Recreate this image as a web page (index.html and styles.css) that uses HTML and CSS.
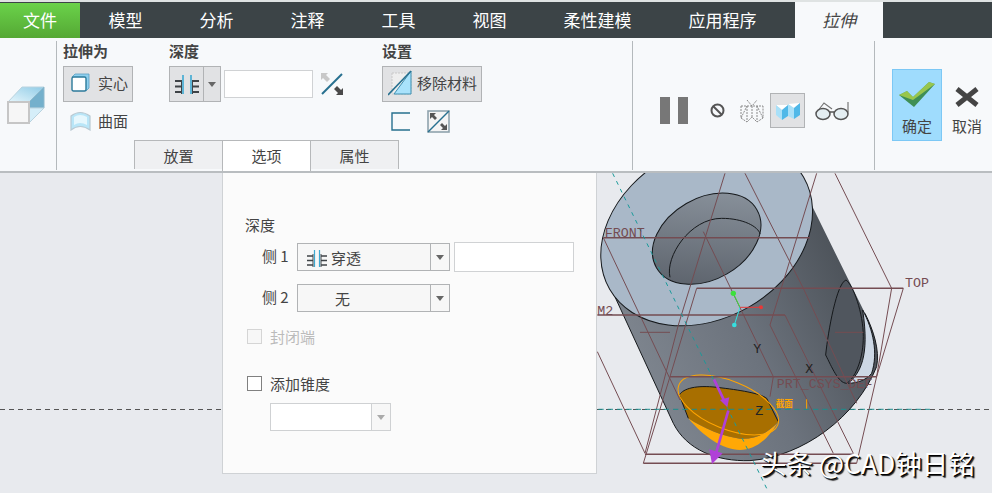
FILE: index.html
```html
<!DOCTYPE html>
<html lang="zh-CN">
<head>
    <meta charset="UTF-8">
    <title>拉伸</title>
    <link rel="stylesheet" href="styles.css">
</head>
<body>
    <nav class="tabs">
        <a class="tab file">文件</a>
        <a class="tab">模型</a>
        <a class="tab">分析</a>
        <a class="tab">注释</a>
        <a class="tab">工具</a>
        <a class="tab">视图</a>
        <a class="tab wide">柔性建模</a>
        <a class="tab wide">应用程序</a>
        <a class="tab active">拉伸</a>
    </nav>

    <section class="ribbon">
        <div class="sec sec-type">
            <svg class="cube" width="40" height="40" viewBox="0 0 40 40">
                <defs>
                    <linearGradient id="cubeTop" x1="0" y1="1" x2="1" y2="0">
                        <stop offset="0" stop-color="#e6f6fc"/>
                        <stop offset="1" stop-color="#8fcbe6"/>
                    </linearGradient>
                </defs>
                <polygon points="2,16 16,1 38,1 23,16" fill="url(#cubeTop)" stroke="#b9d3df"/>
                <polygon points="23,16 38,1 38,22 23,22" fill="#74b0cc" stroke="#8fb9cc"/>
                <polygon points="23,22 38,22 23,37" fill="#d5eef9" stroke="#b9d3df"/>
                <rect x="2" y="16" width="21" height="21" fill="#f6f6f6" stroke="#c6c6c6" stroke-width="2"/>
            </svg>
        </div>

        <div class="sec sec-main">
            <div class="groups">
                <div class="group g-as">
                    <h4>拉伸为</h4>
                    <button class="btn btn-solid">
                        <svg width="19" height="19" viewBox="0 0 19 19">
                            <polygon points="1,4 4,1 18,1 18,15 15,18" fill="#8fd0ee" stroke="#5aa0c0" stroke-width=".8"/>
                            <rect x="1" y="4" width="14" height="14" rx="1.500" fill="#fff" stroke="#2c7a9a" stroke-width="1.400"/>
                        </svg>
                        实心
                    </button>
                    <div class="plain">
                        <svg width="21" height="20" viewBox="0 0 21 20">
                            <path d="M1 5 Q10 -2 20 5 L20 19 Q10 12 1 19 Z" fill="#b9e6f8" stroke="#b9c9d2" stroke-width="1.200"/>
                            <path d="M4 6 Q10 2 17 6 L17 14 Q10 10 4 14 Z" fill="#e6f7fd"/>
                        </svg>
                        曲面
                    </div>
                </div>

                <div class="group g-depth">
                    <h4>深度</h4>
                    <div class="depth-row">
                        <div class="split">
                            <span class="split-icon">
                                <svg width="26" height="19" viewBox="0 0 26 19">
                                    <path d="M1 6h7M1 11.500h7M1 17h7M18 6h7M18 11.500h7M18 17h7" stroke="#3f4347" stroke-width="1.800"/>
                                    <path d="M7.500 5v14M18.500 5v14" stroke="#3f4347" stroke-width="1"/>
                                    <path d="M9 0v19M17 0v19" stroke="#3ea9d2" stroke-width="1.600"/>
                                </svg>
                            </span>
                            <span class="split-arrow"><i class="caret"></i></span>
                        </div>
                        <div class="field"></div>
                        <svg class="flip" width="24" height="24" viewBox="0 0 24 24">
                            <path d="M2 22 L22 2" stroke="#27708f" stroke-width="2"/>
                            <path d="M1 1h7L6 3l4 4-3 3-4-4-2 2z" fill="#c8c8c8"/>
                            <path d="M23 23h-7l2-2-4-4 3-3 4 4 2-2z" fill="#4a4a4a"/>
                        </svg>
                    </div>
                </div>

                <div class="group g-set">
                    <h4>设置</h4>
                    <button class="btn btn-remove">
                        <svg width="24" height="26" viewBox="0 0 24 26">
                            <rect x="4" y="3" width="19" height="21" fill="#eee" stroke="#c9c9c9" stroke-dasharray="2 1"/>
                            <polygon points="23,1 23,24 6,24" fill="#a9e2fb" stroke="#3f8fb0"/>
                            <path d="M0 25 L23 1" stroke="#27708f" stroke-width="1.600"/>
                        </svg>
                        移除材料
                    </button>
                    <div class="set-icons">
                        <svg width="19" height="19" viewBox="0 0 19 19">
                            <path d="M19 1H1v17h18" fill="none" stroke="#27708f" stroke-width="1.400"/>
                        </svg>
                        <svg width="23" height="23" viewBox="0 0 23 23">
                            <rect x="1" y="1" width="21" height="21" fill="#f4f4f4" stroke="#8fa3ad" stroke-width="1.600"/>
                            <path d="M1 22 L22 1" stroke="#27708f" stroke-width="1.400"/>
                            <path d="M3 3h6L7 5l3 3-2 2-3-3-2 2z" fill="#555"/>
                            <path d="M20 20h-6l2-2-3-3 2-2 3 3 2-2z" fill="#555"/>
                        </svg>
                    </div>
                </div>
            </div>
            <div class="panel-tabs">
                <span class="ptab">放置</span>
                <span class="ptab on">选项</span>
                <span class="ptab">属性</span>
            </div>
        </div>

        <div class="sec sec-tools">
            <svg class="pause" width="28" height="27" viewBox="0 0 28 27">
                <rect x="0" y="0" width="10" height="27" fill="#777"/>
                <rect x="18" y="0" width="10" height="27" fill="#777"/>
            </svg>
            <svg class="no" width="15" height="15" viewBox="0 0 15 15">
                <circle cx="7.500" cy="7.500" r="6" fill="none" stroke="#555" stroke-width="2"/>
                <path d="M3.500 3.500l8 8" stroke="#555" stroke-width="2"/>
            </svg>
            <svg class="wire" width="24" height="24" viewBox="0 0 24 24">
                <path d="M1 7h22M7 1l5 6 5-6M1 7v12l6 4 5-5 5 5 6-4V7M7 7v16M17 7v16M12 7v11M1 19l6-12M23 19L17 7" fill="none" stroke="#8b8b8b" stroke-width="1" stroke-dasharray="2 1"/>
            </svg>
            <span class="shade">
                <svg width="24" height="20" viewBox="0 0 24 20">
                    <polygon points="0,4 12,4 6,9" fill="#fff"/>
                    <polygon points="12,3 24,2 18,7" fill="#fff"/>
                    <polygon points="0,4 6,9 6,19 0,14" fill="#a9e0f8"/>
                    <polygon points="6,9 12,4 12,15 6,19" fill="#4fb8e8"/>
                    <polygon points="12,3 18,7 18,18 12,15" fill="#a9e0f8"/>
                    <polygon points="18,7 24,2 24,14 18,18" fill="#4fb8e8"/>
                </svg>
            </span>
            <svg class="glasses" width="35" height="20" viewBox="0 0 35 20">
                <path d="M2 11L9 2l8 6M33 1v10" fill="none" stroke="#777" stroke-width="1.200"/>
                <ellipse cx="8" cy="13" rx="7" ry="5.500" fill="#e4eef2" stroke="#555" stroke-width="1.500"/>
                <ellipse cx="26" cy="13" rx="7" ry="5.500" fill="#e4eef2" stroke="#555" stroke-width="1.500"/>
                <path d="M15 11h4" stroke="#555" stroke-width="1.500"/>
            </svg>
        </div>

        <div class="sec sec-done">
            <button class="act ok">
                <svg width="36" height="26" viewBox="0 0 36 26">
                    <polygon points="0,13 8,9 14,15 30,0 36,2 15,25" fill="#3f8f55"/>
                    <polygon points="0,13 8,9 14,15 30,0 36,2 14,18" fill="#b7d84b" opacity=".75"/>
                </svg>
                确定
            </button>
            <button class="act cancel">
                <svg width="26" height="20" viewBox="0 0 26 20">
                    <path d="M3 2l20 16M23 2L3 18" stroke="#444" stroke-width="5"/>
                </svg>
                取消
            </button>
        </div>
    </section>

    <main class="view">
        <svg class="scene" width="992" height="320" viewBox="0 0 992 320">
            <defs>
                <linearGradient id="bodyFill" x1="0" y1="1" x2="1" y2="0.55">
                    <stop offset="0" stop-color="#878e97"/>
                    <stop offset=".6" stop-color="#6c737d"/>
                    <stop offset="1" stop-color="#4e545b"/>
                </linearGradient>
                <linearGradient id="holeFill" x1="0" y1="1" x2="1" y2="0">
                    <stop offset="0" stop-color="#565c65"/>
                    <stop offset="1" stop-color="#8f98a2"/>
                </linearGradient>
            </defs>
            <path d="M0 236.500H222M597 236.500H992" stroke="#555" stroke-dasharray="5 4"/>
            <g transform="translate(590 -3) scale(.3333)">
                <path d="M70 370 L250 760 C290 840 380 875 480 872 C640 860 800 740 860 590 C870 540 850 480 825 430 L655 85 L300 300 Z" fill="url(#bodyFill)"/>
                <path d="M70 370 L250 760 C290 840 380 875 480 872 C640 860 800 740 860 590 C870 540 850 480 825 430" fill="none" stroke="#15181b" stroke-width="3"/>
                <ellipse cx="350" cy="190" rx="336" ry="255" transform="rotate(-30 350 190)" fill="#a9b8c8" stroke="#15181b" stroke-width="3"/>
                <ellipse cx="350" cy="206" rx="174" ry="122" transform="rotate(-30 350 206)" fill="url(#holeFill)" stroke="#15181b" stroke-width="3"/>
                <path d="M240 322 C225 260 300 145 395 145 C460 145 505 170 510 192" fill="none" stroke="#15181b" stroke-width="3"/>
                <path d="M818 420 C850 480 865 550 845 610 C830 630 800 640 775 640 C810 610 840 560 818 420 Z" fill="#cdd8e5" stroke="#15181b" stroke-width="3"/>
                <path d="M768 330 C790 345 820 430 820 500 C820 560 800 620 770 640 C745 640 725 590 707 555 C715 480 740 340 768 330 Z" fill="#50565e" stroke="#15181b" stroke-width="3"/>
                <path d="M295 745 C340 800 400 840 450 840 C490 840 530 815 562 760 C530 790 500 808 450 806 C400 800 340 775 295 745 Z" fill="#ffa806"/>
                <path d="M268 675 C280 655 320 645 380 652 C450 660 510 670 530 685 L565 755 C530 790 500 808 450 806 C400 800 340 775 295 745 Z" fill="#a86f00"/>
                <path d="M295 745 L268 675 C280 655 320 645 380 652 C450 660 510 670 530 685 L565 755" fill="none" stroke="#15181b" stroke-width="3"/>
                <ellipse cx="415" cy="705" rx="160" ry="72" transform="rotate(22 415 705)" fill="none" stroke="#ffa500" stroke-width="3"/>

                <g fill="none" stroke="#744c52" stroke-width="3">
                    <path d="M405 10 L265 465 L165 850"/>
                    <path d="M465 10 L640 355 L800 700"/>
                    <path d="M680 10 L540 465 L730 850"/>
                    <path d="M735 10 L905 355 L860 620 L800 880"/>
                    <path d="M940 355 L860 620"/>
                    <path d="M320 355 L240 620 L160 880"/>
                    <path d="M40 203 L270 690"/>
                    <path d="M340 185 L550 620 L540 680"/>
                    <path d="M22 545 L165 850"/>
                    <path d="M585 435 L790 850"/>
                    <path d="M150 487 H240 M735 487 H820"/>
                </g>
                <g fill="none" stroke="#744c52" stroke-width="4.500">
                    <path d="M40 203 H660"/>
                    <path d="M320 355 H940"/>
                    <path d="M22 435 H585"/>
                    <path d="M240 620 H860"/>
                    <path d="M165 853 H790"/>
                    <path d="M160 880 H800"/>
                </g>
                <path d="M68 10 L530 955" stroke="#1a9a9a" stroke-width="3" stroke-dasharray="12 14"/>
                <path d="M25 718 H1020" stroke="#1a8f8f" stroke-width="3" stroke-dasharray="16 12"/>

                <path d="M430 370 L450 412" fill="none" stroke="#3de03d" stroke-width="3"/>
                <path d="M450 412 L433 465" stroke="#35e0e0" stroke-width="3"/>
                <path d="M450 412 H513" stroke="#e83838" stroke-width="3"/>
                <circle cx="430" cy="370" r="8" fill="#3de03d"/>
                <circle cx="513" cy="412" r="6" fill="#e83838"/>
                <circle cx="433" cy="465" r="7" fill="#35e0e0"/>

                <path d="M372 628 L404 695 M415 722 L378 850" stroke="#b040d8" stroke-width="8"/>
                <polygon points="390,690 418,682 412,712" fill="#b040d8"/>
                <polygon points="358,838 398,850 366,882" fill="#b040d8"/>

                <path d="M650 688 V716" stroke="#ffa500" stroke-width="3"/>
                <g class="datum">
                    <text x="44" y="200">FRONT</text>
                    <text x="945" y="352">TOP</text>
                    <text x="22" y="435">M2</text>
                    <text x="560" y="655">PRT_CSYS_DEF</text>
                </g>
                <g class="axis">
                    <text x="490" y="548">Y</text>
                    <text x="646" y="610">X</text>
                    <text x="496" y="734">Z</text>
                </g>
                <text class="cut" x="557" y="712">截面</text>
            </g>
        </svg>

        <div class="options">
            <div class="opt-title">深度</div>
            <div class="opt-row">
                <label>侧 1</label>
                <div class="select">
                    <span class="select-val">
                        <svg width="20" height="17" viewBox="0 0 20 17">
                            <path d="M0 6h6M0 10.500h6M0 15h6M14 6h6M14 10.500h6M14 15h6" stroke="#3f4347" stroke-width="1.600"/>
                            <path d="M6 4v13M14 4v13" stroke="#3f4347" stroke-width="1"/>
                            <path d="M7.500 0v17M12.500 0v17" stroke="#3ea9d2" stroke-width="1.200"/>
                        </svg>
                        <span>穿透</span>
                    </span>
                    <span class="select-arrow"><i class="caret"></i></span>
                </div>
                <div class="opt-field"></div>
            </div>
            <div class="opt-row">
                <label>侧 2</label>
                <div class="select">
                    <span class="select-val center">无</span>
                    <span class="select-arrow"><i class="caret"></i></span>
                </div>
            </div>
            <div class="check off"><i class="box"></i>封闭端</div>
            <div class="check"><i class="box"></i>添加锥度</div>
            <div class="select taper">
                <span class="select-val"></span>
                <span class="select-arrow"><i class="caret"></i></span>
            </div>
        </div>

        <div class="mark">头条 @CAD钟日铭</div>
    </main>
</body>
</html>
```

FILE: styles.css
```css
* { box-sizing: border-box; }
html, body { margin: 0; height: 100%; }
body {
    width: 992px;
    height: 493px;
    overflow: hidden;
    background: #e8eaee;
    color: #444;
    font-family: "Noto Sans CJK SC", "Noto Sans", sans-serif;
    font-size: 15px;
}
button { font: inherit; color: inherit; padding: 0; }

/* top tabs */
.tabs {
    display: flex;
    height: 38px;
    border-top: 2px solid #dfe3e3;
    background: #3c4447;
}
.tab {
    width: 91px;
    line-height: 36px;
    text-align: center;
    color: #fff;
    font-size: 17px;
}
.tab.file {
    width: 80px;
    margin-top: 1px;
    line-height: 34px;
    background: linear-gradient(#6ad24a, #55a834);
}
.tab.wide { width: 125px; }
.tab.active {
    width: 88px;
    margin-left: 10px;
    background: #f7f9fb;
    color: #444;
    font-style: italic;
}

/* ribbon */
.ribbon {
    display: flex;
    height: 135px;
    background: #f7f9fb;
    border-bottom: 2px solid #b9bdc0;
}
.sec { position: relative; height: 133px; }
.sec + .sec::before {
    content: "";
    position: absolute;
    left: 0;
    top: 3px;
    bottom: 1px;
    width: 1px;
    background: #b4b9bc;
}
.sec-type { width: 56px; padding: 48px 0 0 6px; }
.cube { display: block; }
.sec-main {
    width: 576px;
    display: flex;
    flex-direction: column;
    justify-content: space-between;
}
.groups { display: flex; padding: 3px 0 0 7px; }
.group h4 {
    margin: 0;
    height: 25px;
    line-height: 20px;
    font-size: 15px;
    font-weight: 700;
}
.g-as { width: 106px; }
.g-depth { width: 213px; }

.btn {
    display: flex;
    align-items: center;
    height: 36px;
    padding-bottom: 3px;
    background: #e1e2e4;
    border: 1px solid #b1b3b5;
    white-space: nowrap;
}
.btn-solid { width: 70px; padding-left: 7px; gap: 8px; }
.btn-remove { width: 100px; padding-left: 5px; gap: 5px; }
.plain {
    display: flex;
    align-items: center;
    gap: 7px;
    margin: 8px 0 0 7px;
}

.depth-row { display: flex; align-items: center; height: 36px; }
.split {
    display: flex;
    width: 52px;
    height: 36px;
    background: #e1e2e4;
    border: 1px solid #b1b3b5;
}
.split-icon {
    display: flex;
    align-items: center;
    justify-content: center;
    width: 34px;
    border-right: 1px solid #b1b3b5;
}
.split-arrow { display: flex; align-items: center; justify-content: center; flex: 1; }
.caret {
    display: block;
    width: 0;
    height: 0;
    border: 4px solid transparent;
    border-top: 5px solid #666;
    border-bottom: 0;
}
.field {
    width: 89px;
    height: 28px;
    margin-left: 3px;
    background: #fff;
    border: 1px solid #d0d2d4;
}
.flip { margin-left: 7px; }
.set-icons { display: flex; align-items: center; gap: 17px; margin: 8px 0 0 9px; }

.panel-tabs { display: flex; margin-left: 78px; }
.ptab {
    width: 89px;
    height: 29px;
    line-height: 29px;
    text-align: center;
    background: #eff0f2;
    border: 1px solid #b6b8ba;
    border-bottom: 0;
    margin-right: -1px;
}
.ptab.on { background: #fff; position: relative; z-index: 1; height: 31px; }

.sec-tools {
    width: 242px;
    display: flex;
    align-items: center;
    padding: 12px 0 0 28px;
}
.no { margin-left: 22px; }
.wire { margin-left: 15px; }
.shade {
    display: flex;
    align-items: center;
    justify-content: center;
    width: 35px;
    height: 35px;
    margin-left: 6px;
    background: #e1e2e4;
    border: 1px solid #b1b3b5;
}
.glasses { margin-left: 10px; }

.sec-done { flex: 1; display: flex; align-items: flex-start; padding: 31px 0 0 18px; }
.act {
    display: flex;
    flex-direction: column;
    align-items: center;
    width: 50px;
    height: 72px;
    background: none;
    border: 1px solid transparent;
    line-height: 18px;
}
.act.ok { background: #9fdcfd; border-color: #7cc8f5; padding-top: 12px; gap: 9px; }
.act.cancel { padding-top: 17px; gap: 10px; }

/* graphics area */
.view { position: relative; height: 320px; }
.scene { position: absolute; left: 0; top: 0; }
.datum text { font: 40px "Liberation Mono", monospace; fill: #744c52; }
.axis text { font: 40px "Liberation Mono", monospace; fill: #222; }
.cut { font: 700 26px "Noto Sans CJK SC", sans-serif; fill: #ffa500; }

.options {
    position: absolute;
    left: 222px;
    top: 0;
    width: 375px;
    height: 301px;
    padding: 42px 0 0 22px;
    background: #fbfbfb;
    border: 1px solid #cfd2d5;
    border-top: 0;
}
.opt-title { height: 20px; line-height: 20px; }
.opt-row {
    display: flex;
    align-items: center;
    gap: 4px;
    height: 30px;
    margin: 0 0 11px 17px;
}
.opt-row:nth-child(2) { margin-top: 7px; }
.opt-row label { width: 31px; padding-bottom: 4px; white-space: nowrap; }
.select {
    display: flex;
    width: 153px;
    height: 28px;
    background: #f7f7f7;
    border: 1px solid #b1b3b5;
}
.select-val {
    display: flex;
    align-items: center;
    gap: 4px;
    flex: 1;
    padding: 2px 0 0 9px;
    line-height: 24px;
}
.select-val.center { padding-left: 37px; }
.select-arrow {
    display: flex;
    align-items: center;
    justify-content: center;
    width: 19px;
    border-left: 1px solid #b1b3b5;
}
.opt-field {
    width: 120px;
    height: 30px;
    background: #fff;
    border: 1px solid #d0d2d4;
}
.check { display: flex; align-items: center; gap: 8px; height: 20px; margin: 0 0 0 2px; }
.check .box {
    display: block;
    width: 15px;
    height: 15px;
    margin-top: 1px;
    background: #fff;
    border: 1px solid #808080;
}
.check.off { margin-top: 13px; margin-bottom: 27px; color: #bbb; }
.check.off .box { border-color: #d5d5d5; background: #f7f7f7; }
.select.taper {
    width: 121px;
    height: 28px;
    margin: 10px 0 0 25px;
    background: #fff;
    border-color: #cfd1d3;
}
.taper .select-arrow { border-color: #cfd1d3; background: #f7f7f7; }
.taper .caret { border-top-color: #aaa; }

.mark {
    position: absolute;
    left: 760px;
    top: 274px;
    color: #fff;
    font-size: 26.500px;
    line-height: 32px;
    white-space: nowrap;
    text-shadow: 1px 1px 0 #000, 2px 2px 1px #222;
}
```
